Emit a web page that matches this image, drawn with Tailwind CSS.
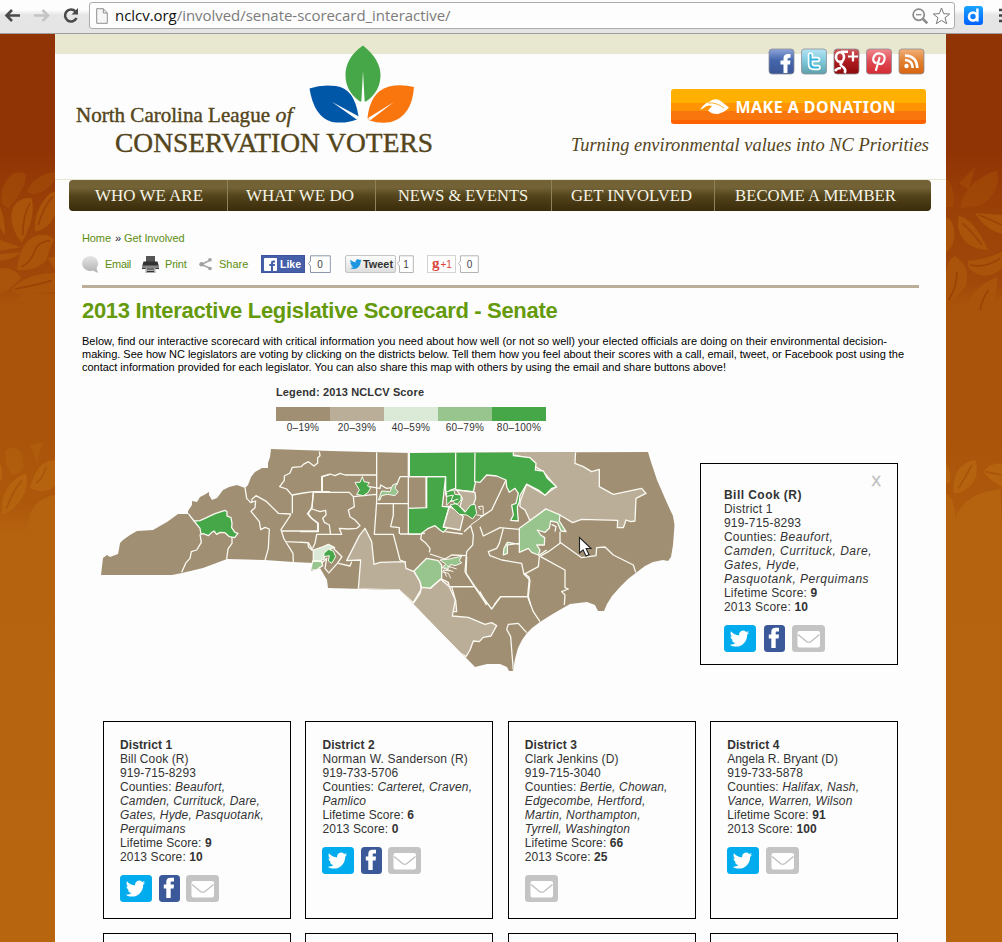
<!DOCTYPE html>
<html lang="en">
<head>
<meta charset="utf-8">
<title>2013 Interactive Legislative Scorecard - Senate</title>
<script src="https://cdn.jsdelivr.net/npm/@tailwindcss/browser@4"></script>
</head>
<body class="w-[1002px] h-[942px] overflow-hidden bg-[#fdfdfd] font-['Liberation_Sans',Arial,sans-serif] text-[12px] text-[#333]">
<svg class="hidden">
  <symbol id="bird" viewBox="0 0 24 24"><path d="M23.6 4.9c-.9.4-1.800.7-2.800.8 1-.6 1.800-1.600 2.100-2.700-.9.600-2 1-3.100 1.200a4.900 4.900 0 0 0-8.400 4.500C7.300 8.500 3.700 6.500 1.300 3.500c-1.300 2.200-.7 5.100 1.500 6.600-.8 0-1.600-.2-2.200-.6 0 2.300 1.600 4.400 3.900 4.900-.7.200-1.500.2-2.200.1.600 2 2.400 3.400 4.600 3.400A9.900 9.900 0 0 1-.4 20c2.200 1.400 4.800 2.200 7.500 2.200 9.100 0 14.300-7.700 14-14.600 1-.7 1.800-1.600 2.500-2.700z"/></symbol>
  <symbol id="tw" viewBox="0 0 32 27"><rect width="32" height="27" rx="3.500" fill="#00aced"/><use href="#bird" x="6" y="3.500" width="19.500" height="19.500" fill="#fff"/></symbol>
  <symbol id="fb" viewBox="0 0 21 27"><rect width="21" height="27" rx="3.500" fill="#3b5998"/><path fill="#fff" d="M7.300 23V13.500H4.800V9.500h2.500V7c0-2.900 1.500-4.200 4.200-4.200H15v3.700h-2c-1 0-1.300.4-1.300 1.300v1.700H15l-.4 4h-2.900V23z"/></symbol>
  <symbol id="mail" viewBox="0 0 33 27"><rect width="33" height="27" rx="3.500" fill="#c4c4c4"/><rect x="5.500" y="6" width="22.500" height="16.500" rx="2" fill="#fff"/><path d="M6 9.500L14.500 16.500Q16.700 18 19 16.500L27.500 9.500" fill="none" stroke="#bcbcbc" stroke-width="1.200"/></symbol>
</svg>

<!-- browser toolbar -->
<header class="h-[34px] w-full flex items-start bg-gradient-to-b from-[#fdfdfd] from-30% via-[#e6e6e6] via-45% to-[#e4e4e4] border-b border-[#a0a0a0]">
  <svg class="w-[88px] h-[32px] shrink-0" viewBox="0 0 88 32" fill="none" stroke-width="2.600">
    <path d="M20 15.500H6.500M12 10l-5.500 5.500L12 21" stroke="#4a4a4a"/>
    <path d="M34 15.500H48M42.500 10l5.500 5.500-5.500 5.500" stroke="#c4c4c4"/>
    <path d="M75.500 11.500A6 6 0 1 0 76.500 18" stroke="#4a4a4a"/><path d="M78 8v6.500h-6.500z" fill="#4a4a4a"/>
  </svg>
  <div class="mt-[2px] ml-[1px] w-[866px] h-[27px] border border-[#acacac] rounded-[3px] bg-[#fdfdfd] flex items-center">
    <svg class="w-3 h-4 ml-[6px]" viewBox="0 0 12 16"><path d="M.7.7h6.600L11.300 5v10.300H.7z" fill="#f6f6f6" stroke="#909090"/><path d="M7.300.7V5h4" fill="none" stroke="#909090"/></svg>
    <div class="ml-[7px] h-6 leading-[23px] text-[15px] whitespace-nowrap font-['Open_Sans',sans-serif] text-[#7b7b7b] tracking-[-0.04px]"><span class="text-[#111]">nclcv.org</span>/involved/senate-scorecard_interactive/</div>
    <div class="grow"></div>
    <svg class="w-4 h-4" viewBox="0 0 16 16" fill="none" stroke="#8a8a8a" stroke-width="1.700"><circle cx="6.700" cy="6.700" r="5.600"/><path d="M11 11l4.300 4.300" stroke-width="2.500"/><path d="M4 6.700h5.400" stroke-width="1.300"/></svg>
    <svg class="w-[19px] h-[18px] ml-[4px] mr-[3px]" viewBox="0 0 19 18" fill="#fff" stroke="#777"><path d="M9.500 1l2.200 5.700 6 .3-4.700 3.800 1.700 5.900-5.200-3.300-5.200 3.300L6 10.800 1.300 7l6-.3z"/></svg>
  </div>
  <svg class="w-[47px] h-[32px]" viewBox="0 0 47 32"><defs><linearGradient id="dg" x2="0" y2="1"><stop stop-color="#1aa4ff"/><stop offset="1" stop-color="#0060ff"/></linearGradient></defs><rect x="9" y="6" width="19" height="19" rx="3" fill="url(#dg)"/><circle cx="18" cy="16.500" r="4" fill="none" stroke="#fff" stroke-width="2.600"/><path d="M22.400 8.500v13" stroke="#fff" stroke-width="2.400"/><path d="M44 10h4M44 15.500h4M44 21h4" stroke="#444" stroke-width="2.600"/></svg>
</header>

<div class="flex h-[908px] overflow-hidden">
  <!-- left leaf wallpaper -->
  <svg class="w-[55px] h-[908px] shrink-0" viewBox="0 34 55 908">
    <defs>
      <linearGradient id="side" x1="0" y1="34" x2="0" y2="942" gradientUnits="userSpaceOnUse">
        <stop stop-color="#913405"/><stop offset=".13" stop-color="#913405"/><stop offset=".2" stop-color="#9b4207"/><stop offset=".27" stop-color="#a0470a"/><stop offset=".3" stop-color="#a9540a"/><stop offset=".44" stop-color="#a9540a"/><stop offset=".52" stop-color="#ad580b"/><stop offset=".55" stop-color="#b66310"/><stop offset="1" stop-color="#b86510"/>
      </linearGradient>
    </defs>
    <rect y="34" width="55" height="908" fill="url(#side)"/>
    <g transform="translate(0 140) scale(.3333)" fill="#a9540a">
      <g opacity=".45"><path d="M5 190Q0 130 40 100Q80 90 78 110Q70 160 25 205zM80 155Q100 105 165 95V120Q140 160 95 162z"/></g>
      <path d="M65 308Q20 250 40 200Q60 170 95 175Q110 230 65 308zM105 275Q100 210 150 160L165 155V225Q150 265 105 275zM0 200Q16 240 15 285Q5 275 0 260zM0 300L62 322L0 332zM0 342L62 337Q40 360 0 362zM50 390Q60 300 115 285Q150 280 162 300Q150 320 140 360Q110 395 50 390zM0 385Q40 380 64 413Q30 450 0 462zM38 445Q90 395 165 400V455Q80 465 38 458zM143 355l22-5v38zM65 462H165V490H40z"/>
      <g fill="none" stroke="#9b4207" stroke-width="5"><path d="M68 285Q70 220 90 190M115 255Q130 200 158 170M65 380Q95 365 105 330Q115 305 150 302M45 447Q110 435 155 422"/></g>
    </g>
    <g transform="translate(0 30) scale(.3333)" fill="#b66310">
      <path d="M5 1440Q5 1360 78 1330Q90 1380 55 1420Q30 1450 5 1455zM90 1375Q110 1290 165 1290V1370Q130 1395 90 1375zM85 1500Q80 1410 165 1395V1500zM0 1300q10 20 5 50h-5z"/>
      <path opacity=".5" d="M15 1260q30-20 50 10q20 60-30 65q-20-25-20-75zM90 1245l40-10-20 60z"/>
      <path d="M20 1435Q40 1380 65 1352M108 1360Q130 1345 138 1310" fill="none" stroke="#a9540a" stroke-width="5"/>
    </g>
  </svg>

  <main class="w-[891px] shrink-0 flex flex-col bg-[#fdfdfd]">
    <!-- masthead -->
    <div class="h-[146px] shrink-0 border-b border-[#e8e7cf] bg-[linear-gradient(#e8e7cf_20px,#fdfdfd_20px)] flex justify-between">
      <svg class="w-[400px] h-[145px] overflow-visible" viewBox="55 34 400 145">
        <path d="M363 45.500Q381 60 380.500 76Q380 92 366 101.500H360Q346 92 345.500 76Q345 58 363 45.500z" fill="#46a748"/>
        <path d="M309.500 88.500Q322 84 336 86Q354 88 358.500 116L357 119.500Q346 124 332 122Q314 117 309.500 88.500z" fill="#0057a8"/>
        <path d="M414 87Q401 84 389 86.500Q370 92 367.500 118L369.500 120.500Q380 124 391 122Q412 116 414 87z" fill="#f9760e"/>
        <path d="M363 71L361.300 102h3.400zM332 102L357 119.800l1.500-3.500zM394 102L368 118l2 2.500z" fill="#fdfdfd"/>
        <g font-family="'Liberation Serif',serif" fill="#54451b" stroke="#54451b" stroke-width=".4">
          <text x="76" y="122" font-size="21" textLength="194" lengthAdjust="spacingAndGlyphs">North Carolina League</text>
          <text x="275.500" y="122" font-size="21" font-style="italic" textLength="17" lengthAdjust="spacingAndGlyphs">of</text>
          <text x="115" y="152" font-size="28" textLength="318" lengthAdjust="spacingAndGlyphs">CONSERVATION VOTERS</text>
        </g>
      </svg>
      <svg class="w-[391px] h-[145px] overflow-visible" viewBox="555 34 391 145">
        <defs>
          <linearGradient id="g1" x2="0" y2="1"><stop stop-color="#8fa5d8"/><stop offset=".45" stop-color="#4467ac"/><stop offset="1" stop-color="#3b5596"/></linearGradient>
          <linearGradient id="g2" x2="0" y2="1"><stop stop-color="#b5e4f4"/><stop offset=".5" stop-color="#7cc8da"/><stop offset="1" stop-color="#5f9fa8"/></linearGradient>
          <linearGradient id="g3" x2="0" y2="1"><stop stop-color="#d05a5e"/><stop offset=".5" stop-color="#ae1b1f"/><stop offset="1" stop-color="#8c0a0a"/></linearGradient>
          <linearGradient id="g4" x2="0" y2="1"><stop stop-color="#f08a8c"/><stop offset=".5" stop-color="#e04a54"/><stop offset="1" stop-color="#d42b33"/></linearGradient>
          <linearGradient id="g5" x2="0" y2="1"><stop stop-color="#f2b078"/><stop offset=".5" stop-color="#e08030"/><stop offset="1" stop-color="#d8640f"/></linearGradient>
        </defs>
        <g stroke="#8d8f98" stroke-opacity=".8"><rect x="769" y="49" width="25" height="25" rx="3" fill="url(#g1)"/><rect x="801.500" y="49" width="25" height="25" rx="3" fill="url(#g2)"/><rect x="834" y="49" width="25" height="25" rx="3" fill="url(#g3)"/><rect x="866.500" y="49" width="25" height="25" rx="3" fill="url(#g4)"/><rect x="899" y="49" width="25" height="25" rx="3" fill="url(#g5)"/></g>
        <path d="M783.500 73V64.500h-3V60.500h3V58.500q0-4.500 4.500-4.500h2.500v3.800h-1.500q-1.500 0-1.500 1.500v1.200h3l-.5 4h-2.500V73z" fill="#fff"/>
        <path d="M810.500 55v9q0 3.500 3.500 3.500h4M811 59.500h6.500" fill="none" stroke="#fff" stroke-width="5.500" stroke-linecap="round"/><path d="M810.500 55v9q0 3.500 3.500 3.500h4M811 59.500h6.500" fill="none" stroke="#39b5dc" stroke-width="2.200" stroke-linecap="round"/>
        <g fill="none" stroke="#fff" stroke-width="2.600"><ellipse cx="840" cy="57" rx="4" ry="4.800"/><path d="M841 51.800h7M842.500 61.500l-2 2.500q0 1.500 2.500 3q3.500 2.500 1.500 6M835 71q2-3 6-3"/><path d="M848 56.500h10M853 51.500v10" stroke-width="2.200"/></g>
        <path d="M875.500 63q-3.200-2-2-5.500q1.700-4.500 6.500-4q5.500.8 4.500 6q-1.300 5-4.500 4.500q-2-.3-2.500-1.800M879.500 58l-3.500 12" fill="none" stroke="#fff" stroke-width="2.200" stroke-linecap="round"/>
        <circle cx="906.500" cy="66" r="2.200" fill="#fff"/><path d="M905 60q7.500.3 7.700 8M905 55.500q12 .5 12.300 12.500" fill="none" stroke="#fff" stroke-width="2.600"/>
        <path d="M671 103V92q0-3 3-3H923q3 0 3 3v11z" fill="#ffb000"/><rect x="671" y="103" width="255" height="8.500" fill="#ff9303"/><rect x="671" y="111" width="255" height="9.500" fill="#f9760e"/><path d="M671 120H926v1.500q0 2.500-3 2.500H674q-3 0-3-2.500z" fill="#ff6200"/>
        <path d="M700 109.500Q705 102.500 709 102Q714 97.500 720 100.500L729 107.500Q725 112 718 114Q712 114.500 708 110.500L712 106Q707 104.500 703 108.500z" fill="#fff"/><path d="M708 103q8-1 16 5" stroke="#ffa000" fill="none" stroke-width=".8"/>
        <text x="735.500" y="113" font-family="'Noto Sans',sans-serif" font-weight="700" font-size="16" fill="#fff" textLength="160">MAKE A DONATION</text>
        <text x="571" y="151" font-family="'Liberation Serif',serif" font-style="italic" font-size="19.500" fill="#54451b" textLength="358" lengthAdjust="spacingAndGlyphs">Turning environmental values into NC Priorities</text>
      </svg>
    </div>

    <nav class="ml-[14px] w-[862px] h-[31px] shrink-0 rounded-[4px] bg-gradient-to-b from-[#726236] from-25% via-[#54451b] to-[#3a2b0c] flex font-['Liberation_Serif',serif] text-[17px] text-[#f6f4e6]">
      <div class="w-[159px] border-r border-[#8f825a]"><svg class="w-full h-[31px]"><text x="26" y="21" fill="currentColor" textLength="108" lengthAdjust="spacingAndGlyphs">WHO WE ARE</text></svg></div>
      <div class="w-[148px] border-r border-[#8f825a]"><svg class="w-full h-[31px]"><text x="18" y="21" fill="currentColor" textLength="108" lengthAdjust="spacingAndGlyphs">WHAT WE DO</text></svg></div>
      <div class="w-[176px] border-r border-[#8f825a]"><svg class="w-full h-[31px]"><text x="22" y="21" fill="currentColor" textLength="130" lengthAdjust="spacingAndGlyphs">NEWS &amp; EVENTS</text></svg></div>
      <div class="w-[163px] border-r border-[#8f825a]"><svg class="w-full h-[31px]"><text x="19" y="21" fill="currentColor" textLength="121" lengthAdjust="spacingAndGlyphs">GET INVOLVED</text></svg></div>
      <div class="w-[216px]"><svg class="w-full h-[31px]"><text x="20" y="21" fill="currentColor" textLength="161" lengthAdjust="spacingAndGlyphs">BECOME A MEMBER</text></svg></div>
    </nav>

    <div class="ml-[27px] w-[837px] flex flex-col">
      <div class="mt-[20px] h-[14px] leading-[14px] text-[11px] text-[#5b8d10] flex tracking-[-0.1px]"><span class="w-[33px]">Home</span><span class="w-[9px] text-[#223]">»</span><span>Get Involved</span></div>

      <!-- sharing tools -->
      <div class="mt-[9px] h-[20px] flex items-center text-[11px] text-[#5b8d10] whitespace-nowrap">
        <svg class="w-[17px] h-[17px]" viewBox="0 0 17 17"><defs><linearGradient id="em" x2="0" y2="1"><stop stop-color="#e6e6e6"/><stop offset="1" stop-color="#b0b0b0"/></linearGradient></defs><path d="M8 0a8 7.500 0 0 1 6.500 12l1.500 5-5-2.500A8 7.500 0 1 1 8 0z" fill="url(#em)"/></svg>
        <span class="ml-[6px] w-[37px] tracking-[-0.3px]">Email</span>
        <svg class="w-[17px] h-[17px]" viewBox="0 0 17 17"><path d="M4 0h9v6H4z" fill="#555"/><path d="M1.500 5.500h14L17 11v2H0v-2z" fill="#333"/><path d="M0 9.500h17V12H0z" fill="#888"/><path d="M3.500 12h10v5h-10z" fill="#aaa"/><path d="M5 13h7M5 15.500h7" stroke="#333"/></svg>
        <span class="ml-[6px] w-[34px] tracking-[-0.2px]">Print</span>
        <svg class="w-[14px] h-[14px]" viewBox="0 0 14 14"><path d="M11.500 3L2.500 7.500L11.500 11.500" fill="none" stroke="#a8a8a8" stroke-width="1.700"/><g fill="#a0a0a0"><circle cx="11" cy="2.700" r="1.800"/><circle cx="2.500" cy="7.300" r="2.200"/><circle cx="11" cy="11.500" r="1.800"/></g></svg>
        <span class="ml-[6px] w-[42px]">Share</span>
        <span class="w-[44px] h-[18px] bg-[#4560a8] border border-[#3f559b] flex items-center gap-[3px] pl-[2px] font-bold text-[11px]"><svg class="w-[13px] h-[13px]" viewBox="0 0 13 13"><rect width="13" height="13" rx="1" fill="#fff"/><path d="M7 13V8H5.300V6H7V4.500Q7 2.500 9.300 2.500h1.700v2H10q-1 0-1 .8V6h2l-.3 2H9v5z" fill="#4560a8"/></svg><svg class="w-[24px] h-[16px]"><text x="0" y="12" fill="#fff" textLength="21" lengthAdjust="spacingAndGlyphs">Like</text></svg></span>
        <svg class="ml-[3px] w-[23px] h-[19px]" viewBox="0 0 23 19"><path d="M2.500 .8H22.300V17.500H2.500V11L.5 8.500 2.500 6z" fill="#fff" stroke="#8c98ac"/><text x="12" y="13" text-anchor="middle" font-size="10" fill="#444">0</text></svg>
        <span class="ml-[14px] w-[51px] h-[18px] rounded-[2px] bg-gradient-to-b from-[#fdfdfd] to-[#dedede] border border-[#c4c4c4] flex items-center pl-[4px]"><svg class="w-[12px] h-[12px] fill-[#1c96e0]"><use href="#bird" width="12" height="12"/></svg><svg class="w-[33px] h-[16px]"><text x="1" y="12" font-size="11" font-weight="700" fill="#333" textLength="30" lengthAdjust="spacingAndGlyphs">Tweet</text></svg></span>
        <svg class="ml-[1px] w-[17px] h-[19px]" viewBox="0 0 17 19"><path d="M2.500 .8H16.300V17.500H2.500V11L.5 8.500 2.500 6z" fill="#fff" stroke="#b4b4b4"/><text x="9" y="13" text-anchor="middle" font-size="10" fill="#444">1</text></svg>
        <span class="ml-[13px] w-[29px] h-[18px] border border-[#d4d4d4] flex"><svg class="w-[27px] h-[16px] overflow-visible" fill="#d9453b"><text x="4" y="12" font-family="Liberation Serif" font-weight="700" font-size="15">g</text><text x="12.500" y="12" font-size="10">+1</text></svg></span>
        <svg class="ml-[2px] w-[21px] h-[19px]" viewBox="0 0 21 19"><path d="M2.500 .8H20.300V17.500H2.500V11L.5 8.500 2.500 6z" fill="#fff" stroke="#b4b4b4"/><text x="11.500" y="13" text-anchor="middle" font-size="10" fill="#444">0</text></svg>
      </div>
      <div class="mt-[11px] h-[3px] bg-[#bcaf99]"></div>

      <h1 class="mt-[9px] h-[28px] leading-[28px] text-[22px] font-bold text-[#659a0c] whitespace-nowrap tracking-[-0.32px]">2013 Interactive Legislative Scorecard - Senate</h1>

      <svg class="mt-[9px] w-[837px] h-[41px] text-[11px]" fill="#000">
        <text x="0" y="11" textLength="805">Below, find our interactive scorecard with critical information you need about how well (or not so well) your elected officials are doing on their environmental decision-</text>
        <text x="0" y="24" textLength="822">making. See how NC legislators are voting by clicking on the districts below. Tell them how you feel about their scores with a call, email, tweet, or Facebook post using the</text>
        <text x="0" y="37" textLength="644">contact information provided for each legislator. You can also share this map with others by using the email and share buttons above!</text>
      </svg>

      <!-- legend -->
      <div class="ml-[194px] mt-[10px] w-[270px]">
        <svg class="block w-[270px] h-[14px]"><text x="0" y="11" font-size="11" font-weight="700" fill="#333" textLength="148">Legend: 2013 NCLCV Score</text></svg>
        <div class="mt-[8px] h-[14px] grid grid-cols-5"><div class="bg-[#a08f73]"></div><div class="bg-[#bbae99]"></div><div class="bg-[#daead6]"></div><div class="bg-[#98c48d]"></div><div class="bg-[#46a748]"></div></div>
        <div class="grid grid-cols-5 text-center text-[10px] leading-[14px] tracking-[0.3px] whitespace-nowrap"><span>0–19%</span><span>20–39%</span><span>40–59%</span><span>60–79%</span><span>80–100%</span></div>
      </div>

      <div class="mt-[11px] ml-[18px] h-[275px] flex">
        <!-- district map -->
        <svg class="w-[580px] h-[230px] mt-[1px]" viewBox="100 447 580 230">
          <defs><clipPath id="nc"><path id="st" d="M101 575L103 558 107 555 110 557 118 554 119 549 120 543 123 540 130 535 137 531 153 530 160 526 167 522 178 514 188 514 188 511 192 505 192 501 197 502 200 497 204 495 209 492 209 495 212 500 217 498 220 494 223 490 229 487 237 485 245 488 248 485 251 477 255 472 262 468 268 468 268 463 270 457 271 449 330 451 410 453 648 452 651 462 657 480 667 503 673 516 674.500 525 673 545 671 557 668 561 663 560 653 562 645 566 637 572 628 579 620 587 612 596 607 604 604 611 598 611 595 605 587 602 570 604 563 608 551 615 540 622 532 628 527 633 522 640 518 648 515 659 513 671 509 671 507 667 500 664 487 664 475 667 400 590 328 588 327 580 320 568 311 571 313 563 293 562 265 560 227 559 203 568 182 573 172 575z"/></clipPath></defs>
          <use href="#st" fill="#a08f73"/>
          <g clip-path="url(#nc)" stroke="#fbfaf2" stroke-width="3.900" stroke-linejoin="round" fill="none">
            <!-- west -->
            <g transform="translate(90 435) scale(.33333)">
              <path fill="#46a748" d="M312 258L330 257 375 236 405 226 411 230 411 243 423 248 426 265 425 278 435 292 444 295 434 308 418 305 405 293 390 292 380 298 372 288 366 292 355 302 340 296 333 298 330 280z"/>
              <path d="M295 236L312 258M330 298L334 322 320 345 304 350 300 370 288 383 275 412M426 306L426 325 414 342 410 372M465 158L470 190 482 203 497 198 495 218 483 229 508 260 512 284 525 277 538 282 535 340 525 376M485 203L486 193 498 182 530 200 565 235 602 237 600 243 573 284 582 312 609 355 610 382M688 50L690 62 683 68 683 84 672 93 655 80 640 88 634 95 607 97 600 114 583 123 583 136 569 155 590 162 607 182 607 235M607 180L640 174 670 170 720 170M697 170V125L720 118M670 172L666 220 652 236 664 250 683 265 683 288H573M586 320L654 323 655 335 668 347"/>
            </g>
            <!-- centre -->
            <g transform="translate(300 435) scale(.33333)">
              <path d="M65 170V125L90 117 105 122 120 115 135 120H228M40 172H148L160 185 228 178M40 172L36 215 25 236 35 250 55 265 55 290H0M36 222L60 230 77 226 78 240 68 250 73 262 88 270 92 300M230 52V200L223 298 280 298 300 375 318 382M228 205L325 206V125H300L290 150M325 125V52M325 125H378V217M325 206V220M280 206V240L272 275 298 278V297M300 297H360M160 185L163 215 145 225 150 245 165 255 180 272 170 280 145 282 118 280 125 298H50L45 325 38 340M0 322L25 323 38 345M100 340L126 365 112 385 85 415M115 385L150 393 155 380M492 290L512 272 520 300 518 330 500 350 495 410 520 450 560 510M390 357L435 372 455 360 500 362M520 455H455L465 490M328 297L375 295M522 155L520 172M436 290L488 297"/>
              <path fill="#bbae99" d="M178 302L195 280 215 320 222 388 240 382 315 380 318 400 342 410 360 440 365 470 340 503 298 465 175 462 182 375 140 377z"/>
              <path fill="#bbae99" d="M365 460L388 460 425 432 445 442 450 465 467 495 470 530H365L340 503z"/>
              <path fill="#98c48d" d="M342 408L380 370 415 377 425 390 425 430 390 460 365 458 360 440z"/>
              <path fill="#46a748" d="M380 125H437L427 214 447 216 430 276 443 278 430 292 420 285 405 272 385 280 362 297H325V220L380 218z"/>
              <path fill="#46a748" d="M328 45H467V160L450 166 437 180 437 125H328z"/>
              <path fill="#46a748" d="M467 45H527V140L520 170 467 165z"/>
              <path fill="#bbae99" d="M448 216L470 225 490 245 480 285 430 276z"/>
              <path fill="#bbae99" d="M470 165L525 172 527 190 518 215 500 235 480 215 487 190z"/>
              <path d="M432 214H465" />
              <path fill="#46a748" stroke-width="3" d="M440 170L462 165 465 178 483 180 483 195 470 210 455 195 440 210zM450 210L470 205 495 232 512 210 525 208 530 235 518 252 500 240 478 238z"/>
              <path stroke-width="3" d="M437 185L460 180 452 200 475 192M530 240L550 242 549 213 535 215 542 225M512 270L540 250"/>
              <path fill="#46a748" stroke-width="3" d="M165 142L180 142 187 125 192 140 208 143 202 152 212 158 205 172 190 182 170 178 178 165z"/>
              <path d="M208 155L240 160 242 150 260 160 275 158"/>
              <path fill="#98c48d" stroke-width="3" d="M235 195L245 168 270 170 278 150 290 145 285 160 295 170 285 182 262 178 245 182 240 195z"/>
              <path fill="#daead6" d="M40 345L70 335 85 328 104 338 95 340 75 352 72 372 60 378 40 378z"/>
              <path fill="#98c48d" d="M38 378L65 380 68 392 48 405 33 404z"/>
              <path fill="#46a748" stroke-width="3" d="M72 355L85 343 100 348 107 365 95 385 85 378 88 362 72 365z"/>
              <path d="M65 385L80 370 75 400 85 412"/>
              <path d="M365 295L362 312 378 325 390 340 388 352"/>
              <path fill="#98c48d" stroke-width="3" d="M420 375L450 372 465 368 485 364 478 376 485 384 465 392 452 388 446 400 425 398 438 388z"/>
              <path stroke-width="3" d="M425 410L445 415 452 430M432 400L460 410M440 392L470 402M440 425L430 405 450 408"/>
            </g>
            <!-- east -->
            <g transform="translate(480 435) scale(.33333)">
              <path fill="#bbae99" d="M100 40V60L150 70 165 95 190 110 228 155 195 180 140 148 120 200 120 215 135 225 150 257 197 222 240 240 278 263 305 253 413 256 412 278 430 278 438 255 452 260 465 258 468 190 498 175 485 160 400 178 358 155 358 103 335 110 310 95 285 85 287 45z"/>
              <path fill="#46a748" d="M-15 45H100V62L150 68 168 85 166 105 190 108 202 130 215 142 230 156 215 160 195 181 175 165 140 147 120 182 118 200 112 215 113 235 115 258 92 256 100 240 95 210 108 205 115 175 105 160 88 172 80 155 78 135 50 123 20 120 0 142 -16 140z"/>
              <path d="M78 135L35 225 0 248M0 275L10 303 60 278 118 283M70 280L58 325 50 340 25 350 30 362 65 375 125 385 132 418 175 395 178 365 205 350 240 325 240 290M240 322L305 368 348 362 350 338 375 336 400 360 460 390 467 412M182 365L255 405V458L265 462 245 470 255 480 253 510M132 418L150 435 145 485H62L42 510M145 485L152 510M0 470L20 510"/>
              <path fill="#98c48d" d="M118 280L198 222 240 240 238 258 258 290 243 288 232 262 212 258 208 280 195 292 172 285 182 300 194 308 193 330 170 330 180 345 175 360 155 352 145 340 118 352 118 325 82 330 82 355 70 360 72 340 82 322 118 328z"/>
              <path d="M215 268L228 275 225 290M175 362L200 345"/>
            </g>
            <!-- south -->
            <g transform="translate(390 540) scale(.33333)">
              <path fill="#bbae99" d="M95 142L122 145 152 118 178 140 196 180 187 228 235 232 285 253 305 248 320 257 303 288 280 292 268 305 250 303 240 330 228 350 180 320 60 200 70 190 90 160z"/>
              <path d="M180 140H255L305 207 332 170H413L418 112 403 100M255 140L228 100 230 50M413 170L430 215 450 245M410 278L385 250 355 253 350 268 362 290 365 330 370 390"/>
            </g>
          </g>
          <path d="M579.500 537.500v15.500l3.600-3.200 2.900 6.200 3-1.300-2.900-6.200h5z" fill="#fff" stroke="#222" stroke-width="1.100"/>
        </svg>

        <!-- selected legislator -->
        <section class="ml-[20px] mt-[17px] w-[198px] h-[202px] border border-black pl-[23px] pt-[10px] leading-[14px] text-[12px] tracking-[0.2px] whitespace-nowrap">
          <div class="text-right pr-[16px] h-[14px] text-[14px] text-[#bcbcbc] [-webkit-text-stroke:0.4px_#bcbcbc]">X</div>
          <b class="tracking-[0.45px]">Bill Cook (R)</b><br>District 1<br>919-715-8293<br>Counties: <i class="tracking-[0.5px]">Beaufort,<br>Camden, Currituck, Dare,<br>Gates, Hyde,<br>Pasquotank, Perquimans</i><br>Lifetime Score: <b>9</b><br>2013 Score: <b>10</b>
          <div class="mt-[11px] flex"><svg class="w-8 h-[27px]"><use href="#tw"/></svg><svg class="ml-2 w-[21px] h-[27px]"><use href="#fb"/></svg><svg class="ml-[7px] w-[33px] h-[27px]"><use href="#mail"/></svg></div>
        </section>
      </div>

      <!-- district cards -->
      <div class="ml-[21px] grid grid-cols-[repeat(4,188px)] gap-x-[14.400px] gap-y-[14px] leading-[14px] whitespace-nowrap text-[12px] tracking-[0.1px]">
        <section class="h-[198px] border border-black pl-[16px] pt-[16px]"><b>District 1</b><br>Bill Cook (R)<br>919-715-8293<br>Counties: <i class="tracking-[0.16px]">Beaufort,<br>Camden, Currituck, Dare,<br>Gates, Hyde, Pasquotank,<br>Perquimans</i><br>Lifetime Score: <b>9</b><br>2013 Score: <b>10</b>
          <div class="mt-[11px] flex"><svg class="w-8 h-[27px]"><use href="#tw"/></svg><svg class="ml-[7px] w-[21px] h-[27px]"><use href="#fb"/></svg><svg class="ml-[6px] w-[33px] h-[27px]"><use href="#mail"/></svg></div></section>
        <section class="h-[198px] border border-black pl-[16px] pt-[16px]"><b>District 2</b><br><span class="tracking-[0.18px]">Norman W. Sanderson (R)</span><br>919-733-5706<br>Counties: <i class="tracking-[0.16px]">Carteret, Craven,<br>Pamlico</i><br>Lifetime Score: <b>6</b><br>2013 Score: <b>0</b>
          <div class="mt-[11px] flex"><svg class="w-8 h-[27px]"><use href="#tw"/></svg><svg class="ml-[7px] w-[21px] h-[27px]"><use href="#fb"/></svg><svg class="ml-[6px] w-[33px] h-[27px]"><use href="#mail"/></svg></div></section>
        <section class="h-[198px] border border-black pl-[16px] pt-[16px]"><b>District 3</b><br>Clark Jenkins (D)<br>919-715-3040<br>Counties: <i class="tracking-[0.16px]">Bertie, Chowan,<br>Edgecombe, Hertford,<br>Martin, Northampton,<br>Tyrrell, Washington</i><br>Lifetime Score: <b>66</b><br>2013 Score: <b>25</b>
          <div class="mt-[11px] flex"><svg class="w-[33px] h-[27px]"><use href="#mail"/></svg></div></section>
        <section class="h-[198px] border border-black pl-[16px] pt-[16px]"><b>District 4</b><br><span class="tracking-[0px]">Angela R. Bryant (D)</span><br>919-733-5878<br>Counties: <i class="tracking-[0.16px]">Halifax, Nash,<br>Vance, Warren, Wilson</i><br>Lifetime Score: <b>91</b><br>2013 Score: <b>100</b>
          <div class="mt-[11px] flex"><svg class="w-8 h-[27px]"><use href="#tw"/></svg><svg class="ml-[7px] w-[33px] h-[27px]"><use href="#mail"/></svg></div></section>
        <section class="h-[20px] border border-b-0 border-black"></section><section class="h-[20px] border border-b-0 border-black"></section><section class="h-[20px] border border-b-0 border-black"></section><section class="h-[20px] border border-b-0 border-black"></section>
      </div>
    </div>
  </main>

  <!-- right leaf wallpaper -->
  <svg class="w-[56px] h-[908px] shrink-0" viewBox="946 34 56 908">
    <rect x="946" y="34" width="56" height="908" fill="url(#side)"/>
    <g transform="translate(942 140) scale(.33333)" fill="#a9540a">
      <path opacity=".4" d="M55 205Q60 130 165 90Q180 150 120 195zM12 110Q40 140 35 200H12zM50 130l50-50-20 70z"/>
      <path d="M12 235q20 0 25 40q0 50-25 60zM50 228Q95 235 138 330Q60 325 48 260zM100 220L180 225V282Q130 270 100 220zM12 400Q15 360 38 348Q90 380 70 440Q40 480 12 490zM78 362Q130 360 180 335V385Q130 430 80 385zM75 540Q65 450 165 412Q170 480 130 540zM180 465q-30 30-40 80h40z"/>
      <path d="M62 250Q90 275 120 315M20 480Q45 440 45 395M85 375Q130 385 175 355M115 510Q120 475 140 450M110 225Q150 240 178 255" fill="none" stroke="#9b4207" stroke-width="5"/>
      <g fill="#b66310"><path d="M35 1060Q30 970 100 960Q120 1030 50 1060zM125 995Q140 970 180 970V1040Q140 1020 125 995zM40 1140Q60 1060 175 1048L180 1200H12V1060q25 10 28 80zM12 970q20 30 10 60h-10z"/><path d="M50 1045Q70 1010 90 975M130 995L178 1005" fill="none" stroke="#a9540a" stroke-width="5"/></g>
    </g>
  </svg>
</div>
</body>
</html>
